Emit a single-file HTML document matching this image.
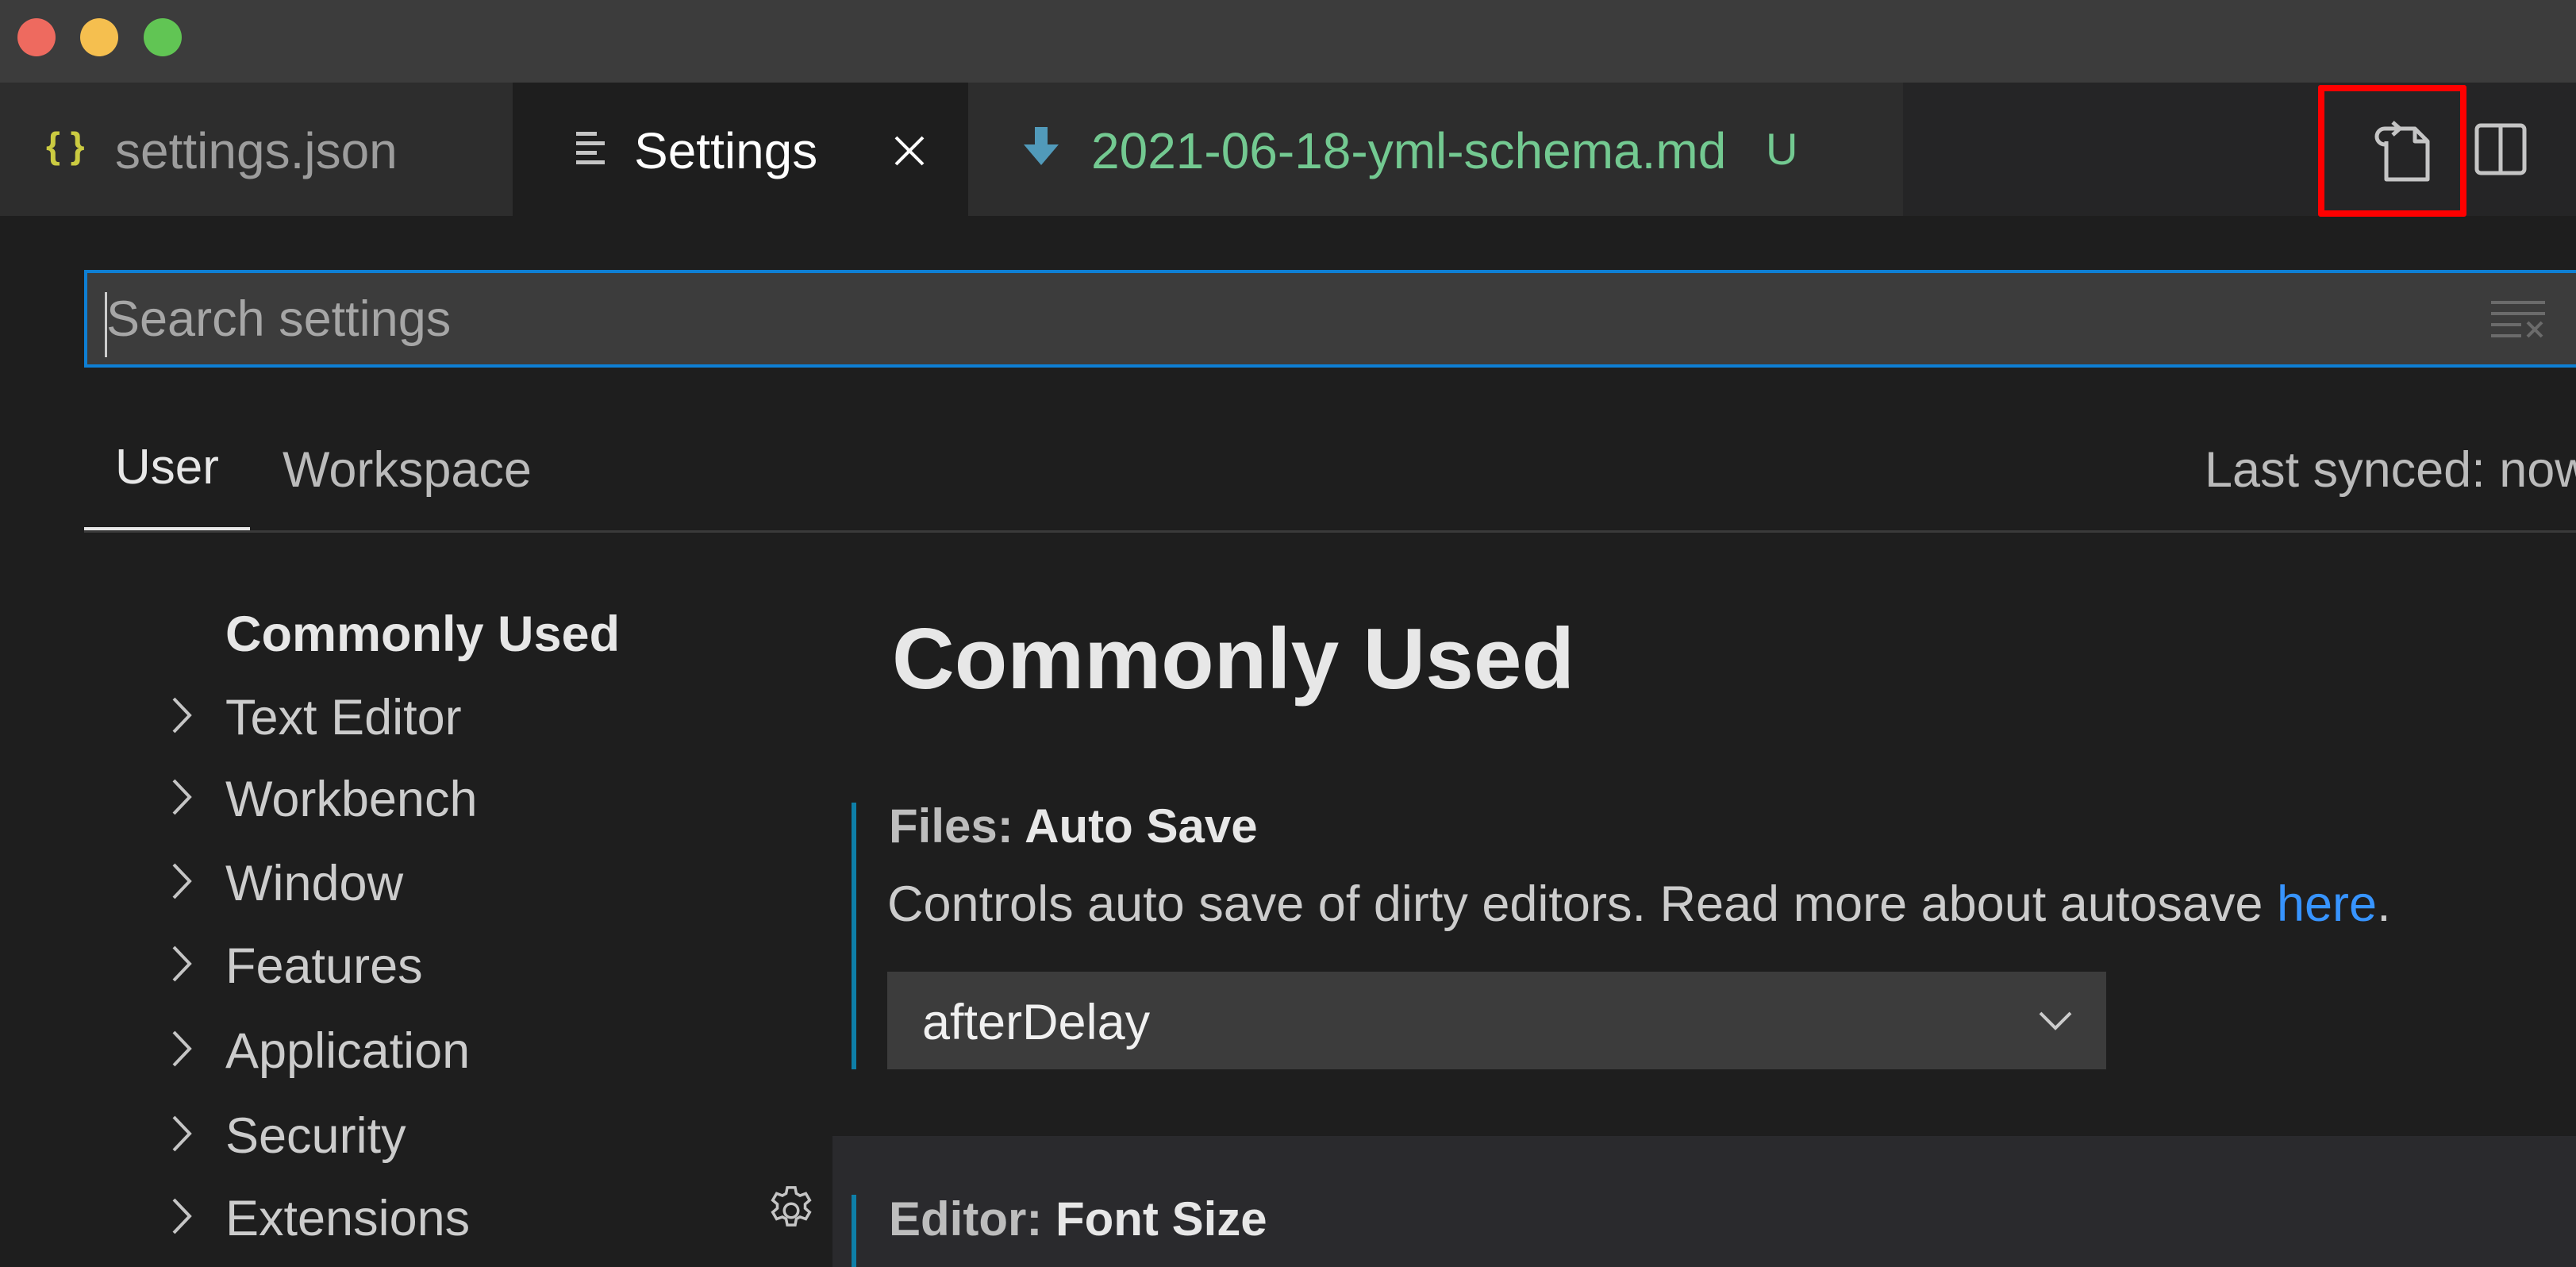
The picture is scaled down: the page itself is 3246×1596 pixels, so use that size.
<!DOCTYPE html>
<html><head><meta charset="utf-8"><style>
*{margin:0;padding:0;box-sizing:border-box}
body{width:3246px;height:1596px;overflow:hidden;background:#1e1e1e;font-family:"Liberation Sans",sans-serif;position:relative}
.a{position:absolute;white-space:nowrap}
.t{line-height:1}
</style></head><body>
<div class="a" style="left:0;top:0;width:3246px;height:104px;background:#3c3c3c"></div>
<div class="a" style="left:22px;top:23px;width:48px;height:48px;border-radius:50%;background:#ee6a5f"></div>
<div class="a" style="left:101px;top:23px;width:48px;height:48px;border-radius:50%;background:#f5bf4f"></div>
<div class="a" style="left:181px;top:23px;width:48px;height:48px;border-radius:50%;background:#61c554"></div>
<div class="a" style="left:0;top:104px;width:3246px;height:168px;background:#252526"></div>
<div class="a" style="left:0;top:104px;width:646px;height:168px;background:#2d2d2d"></div>
<div class="a" style="left:646px;top:104px;width:574px;height:168px;background:#1e1e1e"></div>
<div class="a" style="left:1220px;top:104px;width:1178px;height:168px;background:#2d2d2d"></div>
<div class="a t" style="left:58px;top:160px;font-size:46px;color:#cbcb41;font-weight:bold">{ }</div>
<div class="a t" style="left:145px;top:158px;font-size:64px;color:#9d9d9d">settings.json</div>
<svg class="a" style="left:726px;top:166px" width="42" height="44"><g fill="#c5c5c5"><rect x="0" y="0" width="26" height="5"/><rect x="0" y="12" width="36" height="5"/><rect x="0" y="24" width="26" height="5"/><rect x="0" y="36" width="36" height="5"/></g></svg>
<div class="a t" style="left:799px;top:158px;font-size:64px;color:#ffffff">Settings</div>
<svg class="a" style="left:1126px;top:170px" width="40" height="40"><path d="M3 3L37 37M37 3L3 37" stroke="#fff" stroke-width="4"/></svg>
<svg class="a" style="left:1290px;top:160px" width="44" height="50"><path d="M14 0h16v22h14L22 48 0 22h14z" fill="#519aba"/></svg>
<div class="a t" style="left:1375px;top:158px;font-size:64px;color:#73c991">2021-06-18-yml-schema.md</div>
<div class="a t" style="left:2225px;top:160px;font-size:56px;color:#73c991">U</div>
<div class="a" style="left:2921px;top:107px;width:187px;height:166px;border:8px solid #ff0000;border-radius:3px"></div>
<svg class="a" style="left:2985px;top:148px" width="80" height="84" viewBox="0 0 80 84"><g fill="none" stroke="#c5c5c5" stroke-width="5" stroke-linejoin="round"><path d="M22 30v48h52V30L58 14H40"/><path d="M58 14v16h16"/><path d="M38 14H20a10 10 0 0 0 0 20h4"/><path d="M30 6l9 8-9 8"/></g></svg>
<svg class="a" style="left:3118px;top:155px" width="66" height="66"><rect x="3" y="3" width="60" height="60" rx="5" fill="none" stroke="#c5c5c5" stroke-width="5"/><line x1="33" y1="3" x2="33" y2="63" stroke="#c5c5c5" stroke-width="5"/></svg>
<div class="a" style="left:106px;top:340px;width:3160px;height:123px;background:#3c3c3c;border:4px solid #0e7fd4"></div>
<div class="a" style="left:132px;top:368px;width:3px;height:82px;background:#ccc"></div>
<div class="a t" style="left:134px;top:371px;font-size:63px;color:#a6a6a6">Search settings</div>
<svg class="a" style="left:3137px;top:378px" width="72" height="52"><g stroke="#6b6b6b" stroke-width="4"><line x1="2" y1="3" x2="70" y2="3"/><line x1="2" y1="17" x2="70" y2="17"/><line x1="2" y1="31" x2="40" y2="31"/><line x1="2" y1="45" x2="40" y2="45"/><line x1="48" y1="28" x2="66" y2="46"/><line x1="66" y1="28" x2="48" y2="46"/></g></svg>
<div class="a t" style="left:145px;top:558px;font-size:62px;color:#e7e7e7">User</div>
<div class="a t" style="left:356px;top:561px;font-size:63px;color:#bbbbbb">Workspace</div>
<div class="a t" style="left:2778px;top:561px;font-size:63px;color:#bbbbbb">Last synced: now</div>
<div class="a" style="left:106px;top:668px;width:3140px;height:3px;background:#3a3a3a"></div>
<div class="a" style="left:106px;top:664px;width:209px;height:4px;background:#e7e7e7"></div>
<div class="a t" style="left:284px;top:768px;font-size:63px;color:#e7e7e7;font-weight:bold">Commonly Used</div>
<svg class="a" style="left:215px;top:877px" width="28" height="48"><path d="M4 3l20 21-20 21" fill="none" stroke="#c5c5c5" stroke-width="4"/></svg>
<svg class="a" style="left:215px;top:980px" width="28" height="48"><path d="M4 3l20 21-20 21" fill="none" stroke="#c5c5c5" stroke-width="4"/></svg>
<svg class="a" style="left:215px;top:1086px" width="28" height="48"><path d="M4 3l20 21-20 21" fill="none" stroke="#c5c5c5" stroke-width="4"/></svg>
<svg class="a" style="left:215px;top:1190px" width="28" height="48"><path d="M4 3l20 21-20 21" fill="none" stroke="#c5c5c5" stroke-width="4"/></svg>
<svg class="a" style="left:215px;top:1297px" width="28" height="48"><path d="M4 3l20 21-20 21" fill="none" stroke="#c5c5c5" stroke-width="4"/></svg>
<svg class="a" style="left:215px;top:1404px" width="28" height="48"><path d="M4 3l20 21-20 21" fill="none" stroke="#c5c5c5" stroke-width="4"/></svg>
<svg class="a" style="left:215px;top:1508px" width="28" height="48"><path d="M4 3l20 21-20 21" fill="none" stroke="#c5c5c5" stroke-width="4"/></svg>
<div class="a t" style="left:284px;top:873px;font-size:63px;color:#cccccc">Text Editor</div>
<div class="a t" style="left:284px;top:976px;font-size:63px;color:#cccccc">Workbench</div>
<div class="a t" style="left:284px;top:1082px;font-size:63px;color:#cccccc">Window</div>
<div class="a t" style="left:284px;top:1186px;font-size:63px;color:#cccccc">Features</div>
<div class="a t" style="left:284px;top:1293px;font-size:63px;color:#cccccc">Application</div>
<div class="a t" style="left:284px;top:1400px;font-size:63px;color:#cccccc">Security</div>
<div class="a t" style="left:284px;top:1504px;font-size:63px;color:#cccccc">Extensions</div>
<div class="a t" style="left:1124px;top:776px;font-size:109px;color:#e7e7e7;font-weight:bold">Commonly Used</div>
<div class="a" style="left:1073px;top:1011px;width:6px;height:336px;background:#0e7fa8"></div>
<div class="a t" style="left:1120px;top:1011px;font-size:60px;font-weight:bold;color:#e7e7e7"><span style="color:#bdbdbd">Files: </span>Auto Save</div>
<div class="a t" style="left:1118px;top:1108px;font-size:63px;color:#cccccc">Controls auto save of dirty editors. Read more about autosave <span style="color:#3794ff">here</span>.</div>
<div class="a" style="left:1118px;top:1224px;width:1536px;height:123px;background:#3c3c3c"></div>
<div class="a t" style="left:1162px;top:1257px;font-size:63px;color:#f0f0f0">afterDelay</div>
<svg class="a" style="left:2568px;top:1273px" width="44" height="26"><path d="M3 3l19 19 19-19" fill="none" stroke="#cccccc" stroke-width="4"/></svg>
<div class="a" style="left:1049px;top:1431px;width:2197px;height:165px;background:#2a2a2d"></div>
<div class="a" style="left:1073px;top:1505px;width:6px;height:91px;background:#0e7fa8"></div>
<svg class="a" style="left:962px;top:1490px" width="70" height="70" viewBox="0 0 24 24"><g fill="none" stroke="#c5c5c5" stroke-width="1.2"><circle cx="12" cy="12" r="3"/><path d="M10.3 2h3.4l.5 2.6 1.6.9 2.5-.9 1.7 2.9-2 1.7v1.8l2 1.7-1.7 2.9-2.5-.9-1.6.9-.5 2.6h-3.4l-.5-2.6-1.6-.9-2.5.9-1.7-2.9 2-1.7V9.2l-2-1.7 1.7-2.9 2.5.9 1.6-.9z"/></g></svg>
<div class="a t" style="left:1120px;top:1506px;font-size:60px;font-weight:bold;color:#e7e7e7"><span style="color:#bdbdbd">Editor: </span>Font Size</div>
</body></html>
